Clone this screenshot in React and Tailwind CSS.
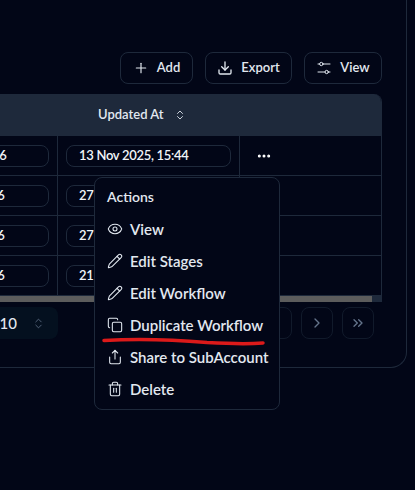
import React from "react";
import { Plus, Download, ChevronsUpDown, ChevronRight, ChevronsRight, Ellipsis, Eye, Pencil, Copy, Share, Trash2 } from "lucide-react";

const rows = [
  ["13 Nov 2025, 15:46", "13 Nov 2025, 15:44", true],
  ["27 Oct 2025, 11:26", "27 Oct 2025, 11:26", false],
  ["27 Oct 2025, 10:16", "27 Oct 2025, 10:16", false],
  ["21 Oct 2025, 09:36", "21 Oct 2025, 09:36", false],
];

const items = [
  [Eye, "View"],
  [Pencil, "Edit Stages"],
  [Pencil, "Edit Workflow"],
  [Copy, "Duplicate Workflow"],
  [Share, "Share to SubAccount"],
  [Trash2, "Delete"],
];

function SlidersIcon({ size, strokeWidth }) {
  return (
    <svg width={size} height={size} viewBox="0 0 24 24" fill="none" stroke="currentColor" strokeWidth={strokeWidth} strokeLinecap="round">
      <path d="M3 6h2.5M10.5 6H21M3 18h10.5M18.5 18H21" />
      <circle cx="8" cy="6" r="2.5" />
      <circle cx="16" cy="18" r="2.5" />
    </svg>
  );
}

function ToolButton({ icon: Icon, label, width, stroke }) {
  return (
    <button className={`flex h-8 items-center justify-center gap-2 rounded-lg border border-[#1e293b] text-[13px] font-semibold text-[#e2e8f0] ${width}`}>
      <Icon size={16} strokeWidth={stroke} />
      {label}
    </button>
  );
}

function Pill({ text }) {
  return (
    <div className="flex h-[22px] w-[165px] shrink-0 items-center rounded-lg border border-[#1e293b] pl-3 text-[13px] tracking-[-0.3px] font-semibold whitespace-nowrap text-[#f1f5f9]">
      {text}
    </div>
  );
}

export default function App() {
  return (
    <div className="relative h-[490px] w-[415px] overflow-hidden bg-[#020617] font-['Lato',sans-serif]">
      <div className="ml-[-200px] h-[368px] w-[607px] rounded-br-2xl border-r border-b border-[#1e293b] pt-[52px] pr-6 pl-[60px]">
        <div className="flex justify-end gap-3">
          <ToolButton icon={Plus} label="Add" width="w-[73px]" stroke={1.75} />
          <ToolButton icon={Download} label="Export" width="w-[87px]" stroke={2} />
          <ToolButton icon={SlidersIcon} label="View" width="w-[78px]" stroke={1.5} />
        </div>

        <div className="mt-2.5 overflow-hidden rounded-t-lg border-r border-[#1e293b]">
          <div className="flex h-[42px] items-center bg-[#1e293b]">
            <div className="w-[198px] shrink-0" />
            <div className="flex items-center gap-2.5 pl-[40px] text-[13px] font-semibold text-[#e2e8f0]">
              Updated At
              <ChevronsUpDown size={12} strokeWidth={1.75} />
            </div>
          </div>
          {rows.map(([left, right, dots]) => (
            <div key={left} className="flex h-10 border-b border-[#1e293b] last:border-b-0">
              <div className="flex w-[198px] shrink-0 items-center justify-end border-r border-[#1e293b] pr-2">
                <Pill text={left} />
              </div>
              <div className="flex w-[182px] shrink-0 items-center border-r border-[#1e293b] pl-2">
                <Pill text={right} />
              </div>
              <div className="flex flex-1 items-center pl-4">
                {dots && <Ellipsis size={16} strokeWidth={2.5} className="text-white" />}
              </div>
            </div>
          ))}
          <div className="h-[6px] bg-[#1e293b]">
            <div className="h-full w-[512px] bg-[#5c5c5c]" />
          </div>
        </div>

        <div className="mt-[5px] flex items-center justify-between">
          <div className="ml-[70px] flex h-8 w-[128px] items-center justify-end gap-[15px] rounded-lg bg-[#04101f] pr-[13px] text-[15px] font-medium text-[#e2e8f0]">
            10
            <ChevronsUpDown size={13} strokeWidth={1.5} className="text-[#64748b]" />
          </div>
          <div className="flex gap-[9px] pr-[8px]">
            <div className="h-8 w-8 rounded-lg border border-[#111a2b]" />
            <div className="flex h-8 w-[32px] items-center justify-center rounded-lg border border-[#111a2b] text-[#64748b]">
              <ChevronRight size={16} />
            </div>
            <div className="flex h-8 w-[32px] items-center justify-center rounded-lg border border-[#111a2b] text-[#64748b]">
              <ChevronsRight size={16} />
            </div>
          </div>
        </div>
      </div>

      <div className="absolute top-[177px] left-[94px] h-[233px] w-[186px] rounded-lg border border-[#1e293b] bg-[#020617] py-1.5 pl-3">
        <div className="flex h-6 items-center text-[14px] font-semibold text-[#e2e8f0]">Actions</div>
        <div className="mt-[5px] flex flex-col">
          {items.map(([Icon, label]) => (
            <div key={label} className="flex h-8 items-center gap-[7px] text-[15px] leading-none font-semibold whitespace-nowrap text-[#e2e8f0]">
              <Icon size={16} strokeWidth={1.6} className="shrink-0" />
              {label}
            </div>
          ))}
        </div>
      </div>

      <svg className="absolute top-[334px] left-[100px]" width="170" height="14" viewBox="0 0 170 14" fill="none">
        <path d="M4 6.5 C30 5 65 5 107 8.5 C125 9.5 150 10 163 9" stroke="#dc1a1a" strokeWidth="3.5" strokeLinecap="round" />
      </svg>
    </div>
  );
}
